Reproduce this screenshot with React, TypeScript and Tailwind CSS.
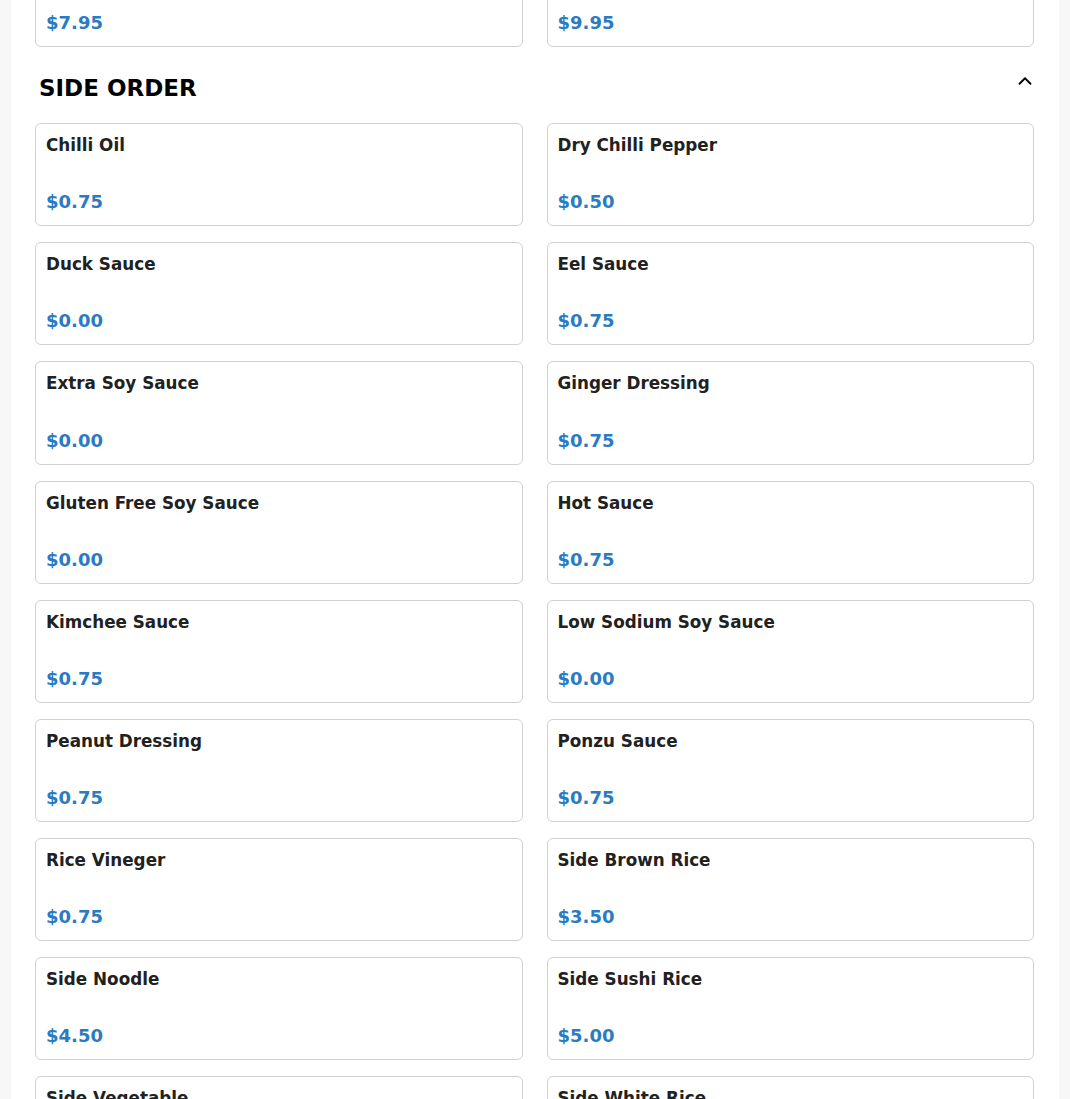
import React from "react";
import { ChevronUp } from "lucide-react";

type Item = { name: string; price: string };

const prevRow: Item[] = [
  { name: "", price: "$7.95" },
  { name: "", price: "$9.95" },
];

const sideOrder: Item[] = [
  { name: "Chilli Oil", price: "$0.75" },
  { name: "Dry Chilli Pepper", price: "$0.50" },
  { name: "Duck Sauce", price: "$0.00" },
  { name: "Eel Sauce", price: "$0.75" },
  { name: "Extra Soy Sauce", price: "$0.00" },
  { name: "Ginger Dressing", price: "$0.75" },
  { name: "Gluten Free Soy Sauce", price: "$0.00" },
  { name: "Hot Sauce", price: "$0.75" },
  { name: "Kimchee Sauce", price: "$0.75" },
  { name: "Low Sodium Soy Sauce", price: "$0.00" },
  { name: "Peanut Dressing", price: "$0.75" },
  { name: "Ponzu Sauce", price: "$0.75" },
  { name: "Rice Vineger", price: "$0.75" },
  { name: "Side Brown Rice", price: "$3.50" },
  { name: "Side Noodle", price: "$4.50" },
  { name: "Side Sushi Rice", price: "$5.00" },
  { name: "Side Vegetable", price: "$4.00" },
  { name: "Side White Rice", price: "$3.00" },
];

const MenuCard = ({ item }: { item: Item }) => (
  <div className="h-[103.125px] flex flex-col justify-between rounded-[6px] border border-[#d0d0d0] bg-white px-[10px] pt-[8px] pb-[10px]">
    <p className="text-[16.8px] leading-[27px] font-bold text-[#212121]">{item.name}</p>
    <p className="text-[18px] leading-[27px] font-bold text-[#2b7bc2]">{item.price}</p>
  </div>
);

export default function App() {
  return (
    <div
      className="h-[1099px] overflow-hidden bg-[#f7f7f7]"
      style={{ fontFamily: '"DejaVu Sans", sans-serif' }}
    >
      <div className="mx-[11px] bg-white pl-[24px] pr-[25px] pb-10">
        {/* tail of previous section */}
        <div className="-mt-[56px] grid grid-cols-2 gap-x-[24px]">
          {prevRow.map((item, i) => (
            <MenuCard key={i} item={item} />
          ))}
        </div>

        <div className="mt-[23px] mb-[17px] flex items-start justify-between pl-[4px]">
          <h2 className="text-[23px] leading-[36px] font-bold text-black">SIDE ORDER</h2>
          <button className="-mr-[2px] text-black">
            <ChevronUp size={22} strokeWidth={2} />
          </button>
        </div>

        <div className="grid grid-cols-2 gap-x-[24px] gap-y-[16px]">
          {sideOrder.map((item) => (
            <MenuCard key={item.name} item={item} />
          ))}
        </div>
      </div>
    </div>
  );
}
